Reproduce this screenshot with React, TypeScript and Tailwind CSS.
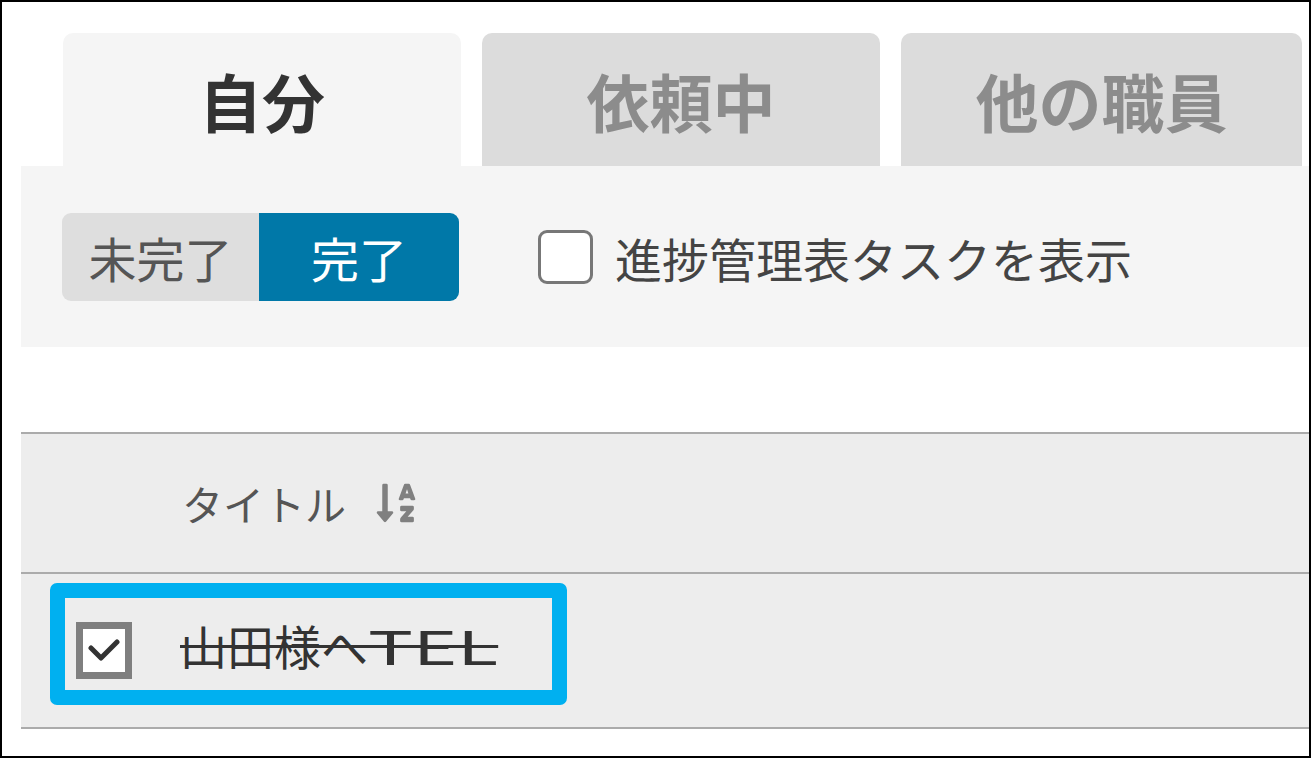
import React from "react";
import { FaSortAlphaDown } from "react-icons/fa";

const font = { fontFamily: '"Noto Sans CJK JP", "Noto Sans", sans-serif' };

export default function App() {
  return (
    <div className="w-[1312px] h-[759px] bg-white" style={font}>
      <div className="w-[1311px] h-[758px] border-2 border-black box-border flex flex-col pl-[19px] pt-[31px]">
        {/* Tabs */}
        <div className="flex gap-[21px] pl-[42px]">
          <div className="w-[398px] h-[133px] rounded-t-[10px] bg-[#f5f5f5] flex items-center justify-center text-[63px] font-bold text-[#333] leading-none">
            自分
          </div>
          <div className="w-[398px] h-[133px] rounded-t-[10px] bg-[#dcdcdc] flex items-center justify-center text-[63px] font-bold text-[#8c8c8c] leading-none">
            依頼中
          </div>
          <div className="w-[401px] h-[133px] rounded-t-[10px] bg-[#dcdcdc] flex items-center justify-center text-[63px] font-bold text-[#8c8c8c] leading-none">
            他の職員
          </div>
        </div>

        {/* Panel */}
        <div className="h-[181px] bg-[#f5f5f5] flex items-start pt-[47px] pl-[41px]">
          <div className="flex items-center">
            <div className="flex h-[88px] rounded-[9px] overflow-hidden">
              <div className="w-[197px] bg-[#dedede] text-[#555] flex items-center justify-center text-[48px] leading-none">
                未完了
              </div>
              <div className="w-[200px] bg-[#0078a8] text-white flex items-center justify-center text-[48px] leading-none">
                完了
              </div>
            </div>
            <div className="ml-[79px] w-[55px] h-[54px] border-[3px] border-[#777] rounded-[9px] bg-white box-border" />
            <div className="ml-[22px] text-[47px] text-[#444] leading-none">
              進捗管理表タスクを表示
            </div>
          </div>
        </div>

        {/* Table */}
        <div className="mt-[85px] border-t-2 border-[#ababab]">
          <div className="h-[138px] bg-[#ededed] border-b-2 border-[#ababab] flex items-center pl-[161px] box-content">
            <span className="text-[41px] text-[#555] leading-none">タイトル</span>
            <FaSortAlphaDown className="ml-[28px] w-[44px] h-[44px] text-[#808080]" />
          </div>
          <div className="h-[153px] bg-[#ededed] border-b-2 border-[#ababab] box-content pt-0">
            <div className="pt-[9px] pl-[29px]">
              <div className="w-[517px] h-[122px] border-[15px] border-[#00b0f0] rounded-[7px] box-border flex items-start">
                <div className="mt-[24px] ml-[11px] w-[56px] h-[57px] border-[7px] border-[#7f7f7f] bg-white box-border flex items-center justify-center">
                  <svg width="32" height="24" viewBox="0 0 32 24" fill="none">
                    <path d="M3 9 L13 19 L29 3" stroke="#333" strokeWidth="5" strokeLinecap="round" strokeLinejoin="round" />
                  </svg>
                </div>
                <div className="ml-[48px] mt-[23px] text-[47px] text-[#333] leading-none whitespace-nowrap">
                  <span className="line-through decoration-[#333] decoration-[3px]">山田様へ</span>
                  <span className="inline-block origin-left scale-x-[1.6] line-through decoration-[#333] decoration-[3px]">TEL</span>
                </div>
              </div>
            </div>
          </div>
        </div>
      </div>
    </div>
  );
}
